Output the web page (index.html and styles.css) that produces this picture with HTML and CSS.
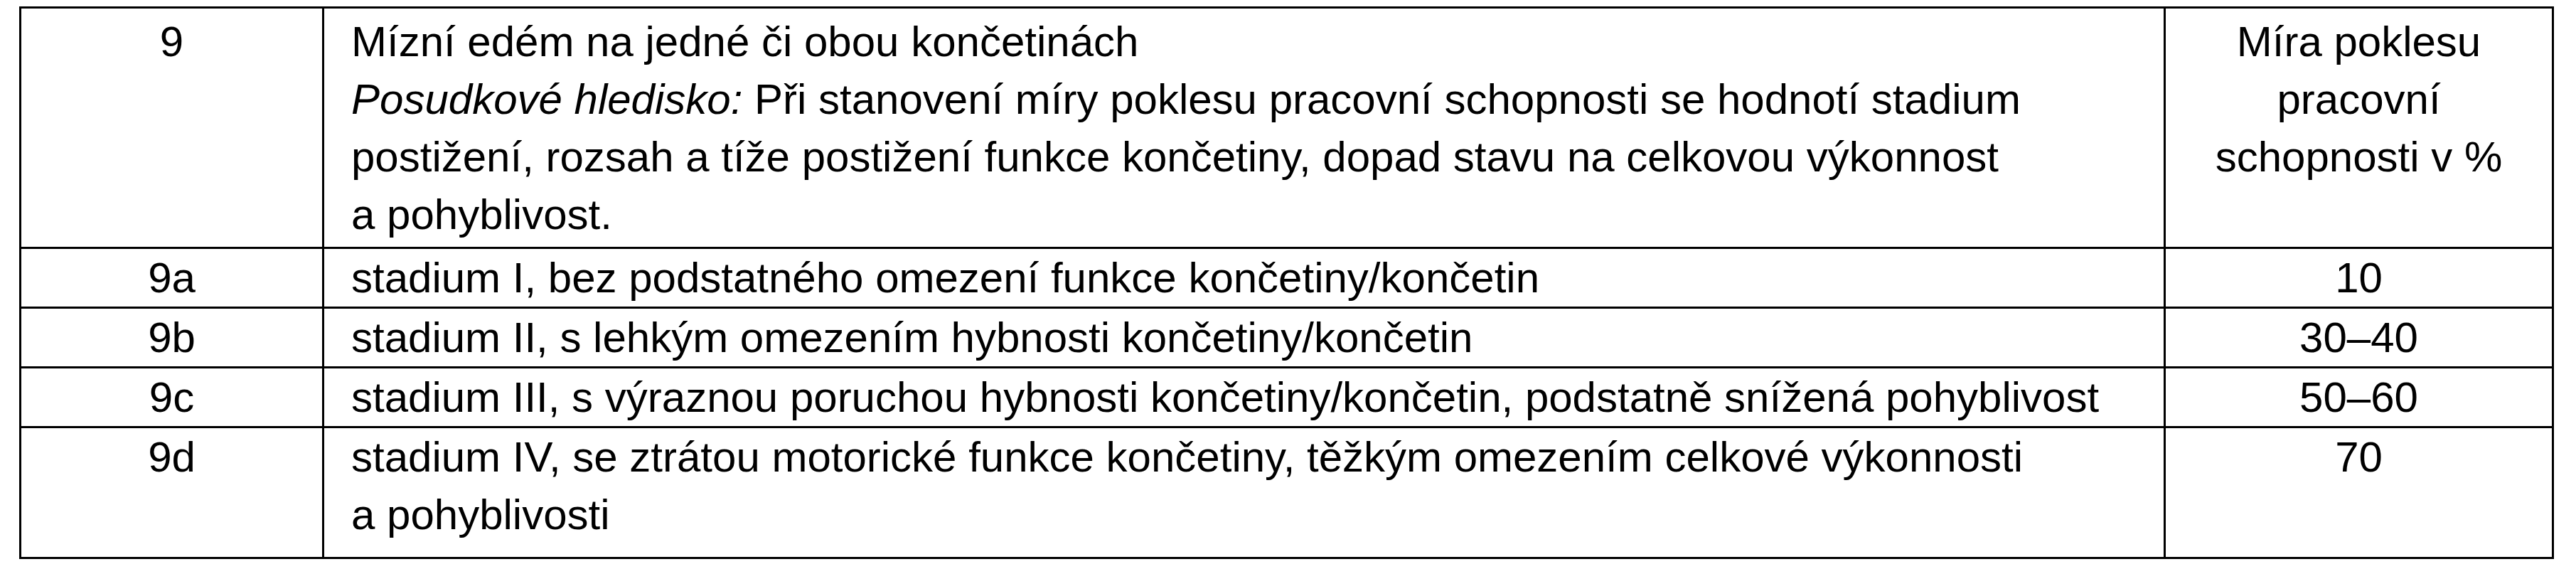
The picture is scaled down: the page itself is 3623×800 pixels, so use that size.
FILE: index.html
```html
<!DOCTYPE html>
<html lang="cs">
<head>
<meta charset="utf-8">
<title>Mízní edém</title>
<link rel="stylesheet" href="styles.css">
</head>
<body>
<table class="grid">
  <colgroup>
    <col class="c-code">
    <col class="c-desc">
    <col class="c-pct">
  </colgroup>
  <tr class="row-head">
    <td class="code">9</td>
    <td class="desc">Mízní edém na jedné či obou končetinách<br><em>Posudkové hledisko:</em> Při stanovení míry poklesu pracovní schopnosti se hodnotí stadium<br>postižení, rozsah a tíže postižení funkce končetiny, dopad stavu na celkovou výkonnost<br>a pohyblivost.</td>
    <td class="pct">Míra poklesu<br>pracovní<br>schopnosti v %</td>
  </tr>
  <tr class="row">
    <td class="code">9a</td>
    <td class="desc">stadium I, bez podstatného omezení funkce končetiny/končetin</td>
    <td class="pct">10</td>
  </tr>
  <tr class="row row-b">
    <td class="code">9b</td>
    <td class="desc">stadium II, s lehkým omezením hybnosti končetiny/končetin</td>
    <td class="pct">30–40</td>
  </tr>
  <tr class="row">
    <td class="code">9c</td>
    <td class="desc">stadium III, s výraznou poruchou hybnosti končetiny/končetin, podstatně snížená pohyblivost</td>
    <td class="pct">50–60</td>
  </tr>
  <tr class="row-last">
    <td class="code">9d</td>
    <td class="desc">stadium IV, se ztrátou motorické funkce končetiny, těžkým omezením celkové výkonnosti<br>a pohyblivosti</td>
    <td class="pct">70</td>
  </tr>
</table>
</body>
</html>
```

FILE: styles.css
```css
html, body {
  margin: 0;
  padding: 0;
  background: #ffffff;
}

body {
  padding: 9px 0 0 27px;
  font-family: "Liberation Sans", Arial, sans-serif;
  font-size: 60px;
  line-height: 81px;
  color: #000000;
}

.grid {
  border-collapse: separate;
  border-spacing: 0;
  table-layout: fixed;
  width: 3565px;
  border-top: 3px solid #000;
  border-left: 3px solid #000;
}

.c-code { width: 426px; }
.c-desc { width: 2590px; }
.c-pct  { width: 546px; }

.grid td {
  border-right: 3px solid #000;
  border-bottom: 3px solid #000;
  vertical-align: top;
  padding: 0;
  white-space: nowrap;
}

.code,
.pct {
  text-align: center;
}

.desc {
  text-align: left;
  padding-left: 38px !important;
}

.desc em {
  font-style: italic;
}

.row-head td {
  padding-top: 6px;
  padding-bottom: 5px;
}

.row td {
  height: 81px;
}

.row-b td {
  height: 79px;
}

.row-last td {
  padding-bottom: 19px;
}
```
